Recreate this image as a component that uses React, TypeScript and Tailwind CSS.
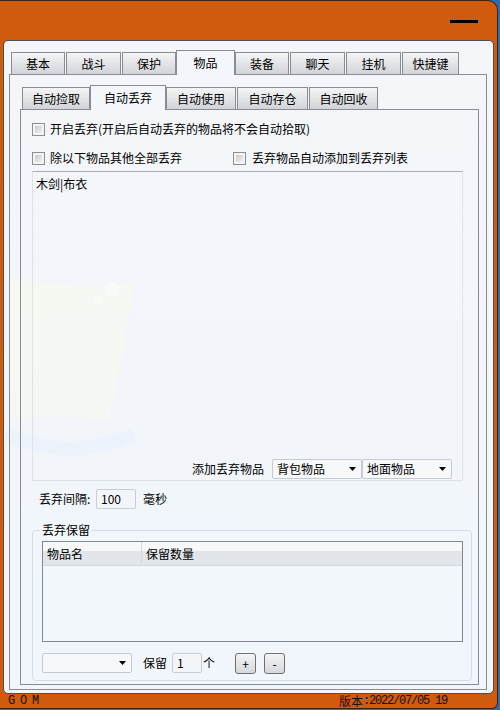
import React from 'react';

interface TabItem {
  label: string;
  cls: string;
  active?: boolean;
}

const mainTabs: TabItem[] = [
  { label: '基本', cls: 'ml-[2px] w-[54px]' },
  { label: '战斗', cls: 'ml-[1px] w-[55px]' },
  { label: '保护', cls: 'ml-[1px] w-[54px]' },
  { label: '物品', cls: 'w-[59px]', active: true },
  { label: '装备', cls: 'w-[54px]' },
  { label: '聊天', cls: 'ml-[1px] w-[55px]' },
  { label: '挂机', cls: 'ml-[1px] w-[55px]' },
  { label: '快捷键', cls: 'ml-[1px] w-[57px]' },
];

const subTabs: TabItem[] = [
  { label: '自动捡取', cls: 'ml-[2px] w-[68px]' },
  { label: '自动丢弃', cls: 'w-[76px]', active: true },
  { label: '自动使用', cls: 'w-[70px]' },
  { label: '自动存仓', cls: 'ml-[1px] w-[71px]' },
  { label: '自动回收', cls: 'ml-[1px] w-[69px]' },
];

function Tab({ label, cls, active }: TabItem) {
  if (active) {
    return (
      <div className={`${cls} relative z-10 -mb-px flex h-[25px] items-center justify-center border border-b-0 border-[#898c95] bg-[#f3f6fa]`}>
        {label}
      </div>
    );
  }
  return (
    <div className={`${cls} flex h-[22px] items-center justify-center border border-b-0 border-[#898c95] bg-linear-to-b from-[#f4f5f6] to-[#d2d4d8]`}>
      {label}
    </div>
  );
}

function TabStrip({ tabs }: { tabs: TabItem[] }) {
  return (
    <div className="flex shrink-0 items-end">
      {tabs.map((t) => (
        <Tab key={t.label} {...t} />
      ))}
    </div>
  );
}

function CheckBox() {
  return (
    <span className="flex h-[13px] w-[13px] shrink-0 border border-[#8f8f8f] bg-[#f4f4f4] p-[2px]">
      <span className="flex-1 bg-linear-to-br from-[#cbcbcb] to-[#f0f0f0]" />
    </span>
  );
}

function Arrow() {
  return (
    <svg width="7" height="4" viewBox="0 0 7 4" className="shrink-0">
      <path d="M0 0h7L3.5 4z" fill="#000" />
    </svg>
  );
}

function Combo({ value, cls }: { value: string; cls: string }) {
  return (
    <div className={`${cls} flex h-[20px] items-center justify-between rounded-[2px] border border-[#c3cad4] bg-[#f6f8fa] pr-[5px] pl-[4px]`}>
      <span>{value}</span>
      <Arrow />
    </div>
  );
}

function SmallButton({ label }: { label: string }) {
  return (
    <div className="flex h-[21px] w-[21px] items-center justify-center rounded-[3px] border border-[#707070] bg-linear-to-b from-[#f4f4f4] to-[#d6d8dc] text-[12px]">
      {label}
    </div>
  );
}

export default function App() {
  return (
    <div className="h-[710px] w-[500px] overflow-hidden bg-[#2c6cb4] font-['Noto_Sans_CJK_SC',sans-serif] text-[12px] leading-none text-black">
      {/* window frame */}
      <div className="flex h-[709px] w-[498px] flex-col rounded-tr-[10px] rounded-br-[6px] border-t border-r border-b border-[#3d2412] bg-[#d05a0e]">
        {/* title bar */}
        <div className="flex h-[39px] shrink-0 justify-end pt-[19px] pr-[19px]">
          <div className="h-[3px] w-[28px] bg-black" />
        </div>

        {/* client panel */}
        <div className="relative mx-[3px] flex h-[654px] shrink-0 flex-col rounded-[5px] border border-[#4b4f56] bg-linear-to-b from-[#f4f6f9] to-[#f0f6fc] pt-[9px] pr-[6px] pb-[3px] pl-[5px]">
          {/* faint wallpaper behind the controls */}
          <svg className="pointer-events-none absolute inset-0 h-full w-full" viewBox="0 0 489 652">
            <path d="M6 236 Q70 250 131 242 L106 380 Q60 372 6 378 Z" fill="#fafbe9" opacity="0.45" />
            <path d="M2 392 Q60 422 130 394" stroke="#e6f0fa" strokeWidth="14" fill="none" opacity="0.45" />
            <circle cx="108" cy="248" r="7" fill="#ffffff" opacity="0.45" />
            <circle cx="95" cy="259" r="5" fill="#ffffff" opacity="0.4" />
          </svg>

          <div className="relative flex flex-1 flex-col">
            <TabStrip tabs={mainTabs} />

            {/* outer tab page */}
            <div className="flex flex-1 flex-col border border-[#898c95] pt-[10px] pr-[7px] pb-[4px] pl-[10px]">
              <TabStrip tabs={subTabs} />

              {/* inner tab page */}
              <div className="flex flex-1 flex-col border border-[#898c95] pl-[11px]">
                <div className="mt-[11px] flex h-[16px] items-center gap-[5px]">
                  <CheckBox />
                  <span>开启丢弃(开启后自动丢弃的物品将不会自动拾取)</span>
                </div>

                <div className="mt-[13px] flex h-[16px] items-center">
                  <div className="flex w-[201px] items-center gap-[5px]">
                    <CheckBox />
                    <span>除以下物品其他全部丢弃</span>
                  </div>
                  <div className="flex items-center gap-[6px]">
                    <CheckBox />
                    <span>丢弃物品自动添加到丢弃列表</span>
                  </div>
                </div>

                {/* item list text box */}
                <div className="mt-[5px] flex h-[310px] w-[431px] flex-col border border-[#dde2e9] border-t-[#abadb3] pt-[6px] pr-[10px] pb-[1px] pl-[3px]">
                  <span>木剑|布衣</span>
                  <div className="mt-auto flex items-center justify-end">
                    <span className="mr-[8px]">添加丢弃物品</span>
                    <Combo value="背包物品" cls="w-[90px]" />
                    <Combo value="地面物品" cls="w-[90px]" />
                  </div>
                </div>

                <div className="mt-[8px] flex h-[20px] items-center pl-[7px]">
                  <span className="w-[57px]">丢弃间隔:</span>
                  <div className="flex h-[20px] w-[40px] items-center rounded-[2px] border border-[#c6cdd6] bg-[#f3f6f9] pl-[4px]">100</div>
                  <span className="ml-[7px]">毫秒</span>
                </div>

                {/* keep group */}
                <div className="relative mt-[21px] flex h-[151px] w-[440px] flex-col rounded-[4px] border border-[#d3dde6] pt-[10px] pl-[9px]">
                  <span className="absolute -top-[7px] left-[7px] bg-[#f1f6fb] px-[2px]">丢弃保留</span>

                  <div className="flex h-[101px] w-[421px] flex-col border border-[#828790] bg-[#f2f7fc]">
                    <div className="flex h-[24px] shrink-0 border-b border-[#d5dae1] bg-linear-to-b from-[#f6f8fa] from-40% to-[#e2e6eb] to-40%">
                      <div className="flex w-[99px] items-center border-r border-[#d5dae1] pl-[4px]">物品名</div>
                      <div className="flex items-center pl-[4px]">保留数量</div>
                    </div>
                  </div>

                  <div className="mt-[11px] flex items-start">
                    <Combo value="" cls="w-[90px]" />
                    <span className="ml-[11px] flex h-[20px] w-[29px] items-center">保留</span>
                    <div className="flex h-[20px] w-[30px] items-center rounded-[2px] border border-[#c6cdd6] bg-[#f3f6f9] pl-[4px]">1</div>
                    <span className="ml-[1px] flex h-[20px] items-center">个</span>
                    <div className="ml-[20px]">
                      <SmallButton label="+" />
                    </div>
                    <div className="ml-[8px]">
                      <SmallButton label="-" />
                    </div>
                  </div>
                </div>
              </div>
            </div>
          </div>
        </div>

        {/* status strip */}
        <div className="flex flex-1 items-center justify-between pr-[50px] pl-[8px] text-[#111]">
          <span className="font-['Liberation_Mono',monospace] text-[12px] tracking-[-1.2px]">G O M</span>
          <span className="flex items-center">
            <span className="text-[12px]">版本</span>
            <span className="font-['Liberation_Mono',monospace] text-[12px] tracking-[-1.2px]">:2022/07/05 19</span>
          </span>
        </div>
      </div>
    </div>
  );
}
